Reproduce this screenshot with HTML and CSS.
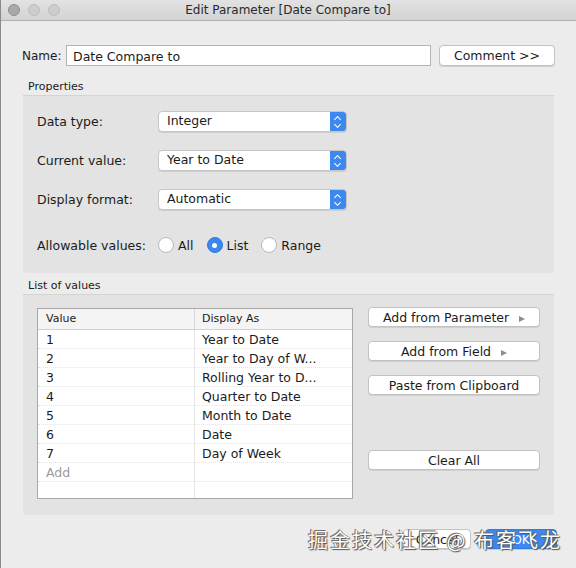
FILE: index.html
```html
<!DOCTYPE html>
<html lang="en">
<head>
    <meta charset="UTF-8">
    <title>Edit Parameter</title>
    <link rel="stylesheet" href="styles.css">
</head>
<body>
    <div class="win">
        <div class="win__titlebar">
            <div class="win__lights"><span></span><span></span><span></span></div>
            <div class="win__title">Edit Parameter [Date Compare to]</div>
        </div>
        <div class="win__body">
            <div class="name-row">
                <span class="name-row__label">Name:</span>
                <div class="name-row__input">Date Compare to</div>
                <div class="btn btn--comment">Comment &gt;&gt;</div>
            </div>

            <div class="group__label">Properties</div>
            <div class="group group--props">
                <div class="field">
                    <span class="field__label">Data type:</span>
                    <div class="select"><span class="select__text">Integer</span><span class="select__step"></span></div>
                </div>
                <div class="field">
                    <span class="field__label">Current value:</span>
                    <div class="select"><span class="select__text">Year to Date</span><span class="select__step"></span></div>
                </div>
                <div class="field">
                    <span class="field__label">Display format:</span>
                    <div class="select"><span class="select__text">Automatic</span><span class="select__step"></span></div>
                </div>
                <div class="field field--radios">
                    <span class="field__label">Allowable values:</span>
                    <span class="radio"></span><span class="radio__text">All</span>
                    <span class="radio radio--on"></span><span class="radio__text">List</span>
                    <span class="radio"></span><span class="radio__text">Range</span>
                </div>
            </div>

            <div class="group__label group__label--list">List of values</div>
            <div class="group group--list">
                <div class="grid">
                    <div class="grid__row grid__row--head"><span>Value</span><span>Display As</span></div>
                    <div class="grid__row"><span>1</span><span>Year to Date</span></div>
                    <div class="grid__row"><span>2</span><span>Year to Day of W...</span></div>
                    <div class="grid__row"><span>3</span><span>Rolling Year to D...</span></div>
                    <div class="grid__row"><span>4</span><span>Quarter to Date</span></div>
                    <div class="grid__row"><span>5</span><span>Month to Date</span></div>
                    <div class="grid__row"><span>6</span><span>Date</span></div>
                    <div class="grid__row"><span>7</span><span>Day of Week</span></div>
                    <div class="grid__row grid__row--add"><span>Add</span><span></span></div>
                    <div class="grid__row grid__row--empty"><span></span><span></span></div>
                </div>
                <div class="side">
                    <div class="btn btn--side">Add from Parameter <i class="tri"></i></div>
                    <div class="btn btn--side">Add from Field <i class="tri"></i></div>
                    <div class="btn btn--side">Paste from Clipboard</div>
                    <div class="btn btn--side btn--clear">Clear All</div>
                </div>
            </div>

            <div class="footer">
                <div class="btn btn--cancel">Cancel</div>
                <div class="btn btn--ok">OK</div>
            </div>
        </div>
        <div class="watermark">掘金技术社区 @ 布客飞龙</div>
    </div>
</body>
</html>
```

FILE: styles.css
```css
body{
    margin: 0;
    font-family: "DejaVu Sans", sans-serif;
    font-size: 12px;
    color: #1b1b1b;
}
.win{
    position: relative;
    width: 576px;
    height: 568px;
    background: #ececec;
    border-left: 1px solid #8a8a8a;
    box-sizing: border-box;
    overflow: hidden;
}
.win__titlebar{
    height: 21px;
    display: flex;
    align-items: center;
    background: linear-gradient(#e2e2e2, #d3d3d3);
    border-bottom: 1px solid #b1b1b1;
    box-sizing: border-box;
}
.win__lights{
    display: flex;
    gap: 8px;
    padding-left: 7px;
}
.win__lights span{
    width: 12px;
    height: 12px;
    border-radius: 50%;
    background: #cdcdcd;
    border: 1px solid #bcbcbc;
    box-sizing: border-box;
}
.win__lights span:first-child{
    background: #a9a9a9;
    border-color: #8f8f8f;
}
.win__title{
    flex: 1;
    text-align: center;
    margin-right: 60px;
    font-size: 12px;
    color: #2a2a2a;
}
.win__body{
    padding: 24px 21px 0 21px;
}
.name-row{
    display: flex;
    align-items: center;
    height: 21px;
}
.name-row__label{
    width: 44px;
}
.name-row__input{
    width: 365px;
    height: 21px;
    line-height: 21px;
    padding-left: 6px;
    box-sizing: border-box;
    background: #fff;
    border: 1px solid #b4b4b4;
    font-size: 12.5px;
}
.btn{
    height: 20px;
    line-height: 19px;
    text-align: center;
    background: #fff;
    border: 1px solid #c2c2c2;
    border-radius: 4px;
    box-shadow: 0 1px 0 #cfcfcf;
    box-sizing: border-box;
    font-size: 12.5px;
}
.btn--comment{
    margin-left: 8px;
    width: 116px;
    height: 21px;
}
.group__label{
    margin: 14px 0 0 6px;
    height: 15px;
    font-size: 11px;
    line-height: 14px;
}
.group__label--list{
    margin-top: 6px;
}
.group{
    margin: 0 1px;
    background: #e3e3e3;
    border-top: 1px solid #d4d4d4;
    border-radius: 0 0 3px 3px;
}
.group--props{
    height: 178px;
    padding: 15px 0 0 14px;
    box-sizing: border-box;
}
.field{
    display: flex;
    align-items: center;
    height: 21px;
    margin-bottom: 18px;
    font-size: 12.5px;
}
.field__label{
    width: 121px;
}
.select{
    width: 189px;
    height: 21px;
    display: flex;
    background: #fff;
    border: 1px solid #c6c6c6;
    border-radius: 4px;
    box-shadow: 0 1px 0 #cdcdcd;
    box-sizing: border-box;
    overflow: hidden;
}
.select__text{
    flex: 1;
    padding-left: 8px;
    line-height: 18px;
}
.select__step{
    width: 16px;
    background: #3d88ee;
    position: relative;
}
.select__step::before,
.select__step::after{
    content: "";
    position: absolute;
    left: 5px;
    width: 4px;
    height: 4px;
    border-left: 1.5px solid #fff;
    border-top: 1.5px solid #fff;
}
.select__step::before{
    top: 5px;
    transform: rotate(45deg);
}
.select__step::after{
    top: 10px;
    transform: rotate(225deg);
}
.field--radios{
    margin-top: 26px;
    height: 18px;
}
.radio{
    width: 16px;
    height: 16px;
    border-radius: 50%;
    background: #fff;
    border: 1px solid #b8b8b8;
    box-sizing: border-box;
    margin-right: 4px;
    position: relative;
}
.radio--on{
    background: #3a87f0;
    border-color: #2f7ae2;
}
.radio--on::after{
    content: "";
    position: absolute;
    left: 4.5px;
    top: 4.5px;
    width: 5px;
    height: 5px;
    border-radius: 50%;
    background: #fff;
}
.radio__text{
    margin-right: 13px;
}
.group--list{
    display: flex;
    align-items: flex-start;
    height: 221px;
    padding: 13px 0 0 14px;
    box-sizing: border-box;
}
.grid{
    width: 316px;
    height: 191px;
    background: #fff;
    border: 1px solid #a8a8a8;
    box-sizing: border-box;
    display: flex;
    flex-direction: column;
}
.grid__row{
    display: grid;
    grid-template-columns: 157px 1fr;
    height: 19px;
    line-height: 19px;
    border-bottom: 1px dotted #e4e4e4;
    box-sizing: border-box;
    font-size: 12.5px;
}
.grid__row span{
    padding-left: 8px;
    border-right: 1px solid #e6e6e6;
    white-space: nowrap;
}
.grid__row span:last-child{
    padding-left: 7px;
    border-right: 0;
}
.grid__row--head{
    height: 21px;
    line-height: 20px;
    background: #f4f4f4;
    border-bottom: 1px solid #d2d2d2;
    font-size: 11px;
}
.grid__row--head span:first-child{
    border-right-color: #d6d6d6;
}
.grid__row--add{
    color: #9a9a9a;
}
.grid__row--empty{
    flex: 1;
    border-bottom: 0;
}
.side{
    margin: -1px 0 0 15px;
    width: 172px;
    display: flex;
    flex-direction: column;
    gap: 14px;
}
.btn--clear{
    margin-top: 41px;
}
.tri{
    display: inline-block;
    width: 0;
    height: 0;
    margin-left: 6px;
    border-left: 6px solid #8d8d8d;
    border-top: 3.5px solid transparent;
    border-bottom: 3.5px solid transparent;
}
.footer{
    display: flex;
    justify-content: flex-end;
    gap: 14px;
    margin-top: 14px;
}
.btn--cancel{
    width: 68px;
}
.btn--ok{
    width: 72px;
    margin-right: -2px;
    background: #3b88f2;
    border-color: #2f7be2;
    color: #fff;
}
.watermark{
    position: absolute;
    left: 307px;
    top: 525px;
    font-family: "Noto Sans CJK SC", sans-serif;
    font-size: 20px;
    letter-spacing: 2px;
    color: #fff;
    text-shadow: 0 0 1px #444, 1px 1px 1px #555, -1px -1px 0 #777;
}
```
